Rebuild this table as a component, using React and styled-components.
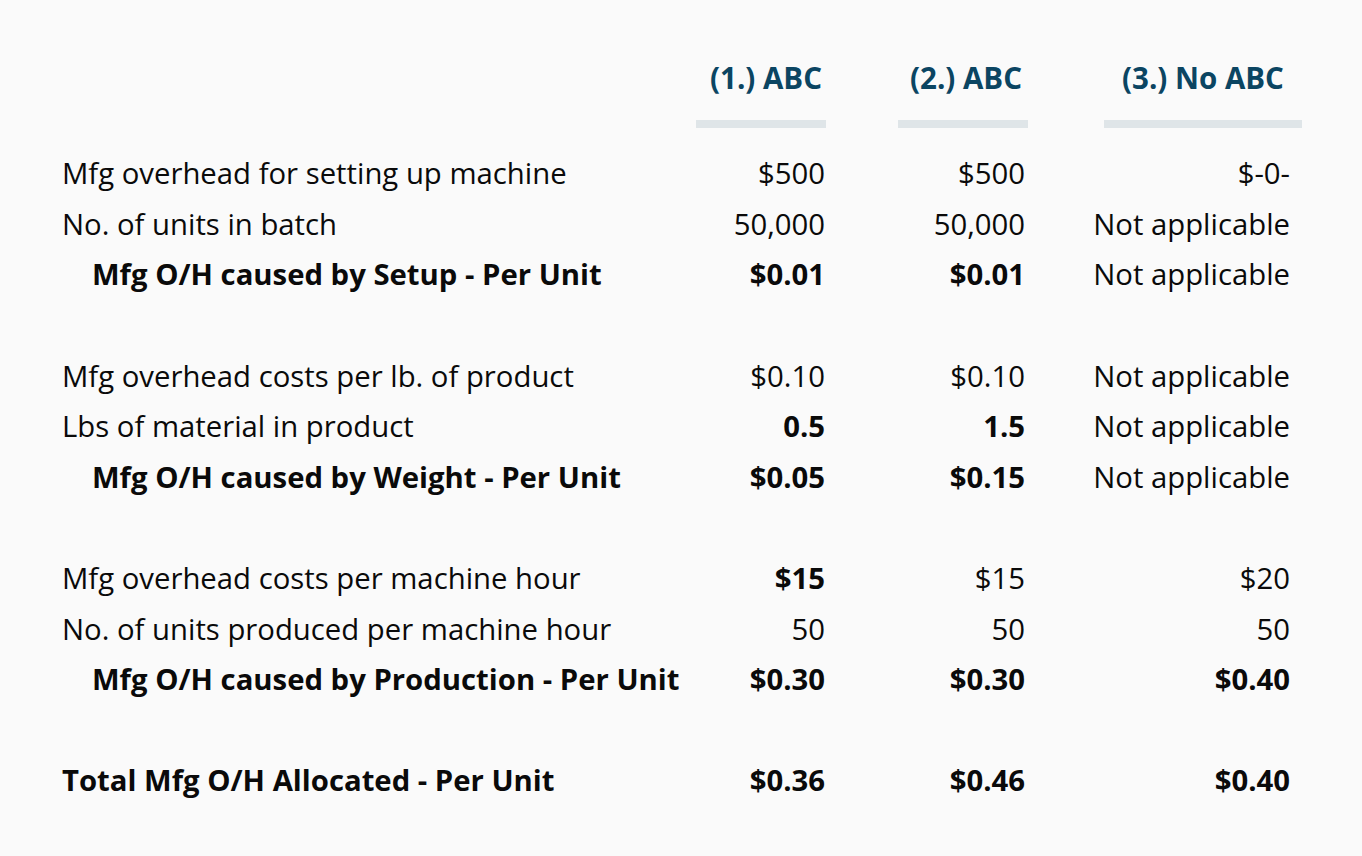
import styled, {createGlobalStyle} from 'styled-components';

const GlobalStyle = createGlobalStyle`
  html, body {
    margin:0;
    padding:0;
    background:#fafafa;
  }
  body {
    font-family:"Open Sans", "Liberation Sans", sans-serif;
    color:#0a0a0a;
  }
`;

const rows = [
  {label:'Mfg overhead for setting up machine', values:['$500', '$500', '$-0-']},
  {label:'No. of units in batch', values:['50,000', '50,000', 'Not applicable']},
  {label:'Mfg O/H caused by Setup - Per Unit', sub:true, values:['$0.01', '$0.01', 'Not applicable'], bold:[true, true, false]},
  null,
  {label:'Mfg overhead costs per lb. of product', values:['$0.10', '$0.10', 'Not applicable']},
  {label:'Lbs of material in product', values:['0.5', '1.5', 'Not applicable'], bold:[true, true, false]},
  {label:'Mfg O/H caused by Weight - Per Unit', sub:true, values:['$0.05', '$0.15', 'Not applicable'], bold:[true, true, false]},
  null,
  {label:'Mfg overhead costs per machine hour', values:['$15', '$15', '$20'], bold:[true, false, false]},
  {label:'No. of units produced per machine hour', values:['50', '50', '50']},
  {label:'Mfg O/H caused by Production - Per Unit', sub:true, values:['$0.30', '$0.30', '$0.40'], bold:[true, true, true]},
  null,
  {label:'Total Mfg O/H Allocated - Per Unit', total:true, values:['$0.36', '$0.46', '$0.40'], bold:[true, true, true]},
];

// right padding of each value column, so the figures line up like the sheet
const padRight = [1, 3, 12];

const headers = [
  {text:'(1.) ABC', width:130, pad:4},
  {text:'(2.) ABC', width:130, pad:6},
  {text:'(3.) No ABC', width:198, center:true},
];

function App() {
  return (
    <>
      <GlobalStyle/>
      <Page>
        <HeadRow>
          <span/>
          {headers.map(h => (
            <HeadCell key={h.text} $width={h.width}>
              <HeadText $center={h.center} $pad={h.pad}>{h.text}</HeadText>
              <Bar/>
            </HeadCell>
          ))}
        </HeadRow>

        <Body>
          {rows.map((row, r) => row === null
            ? <Spacer key={'s' + r}/>
            : [
                <Label key={'l' + r} $sub={row.sub} $bold={row.sub || row.total}>{row.label}</Label>,
                ...row.values.map((v, i) => (
                  <Value key={r + '-' + i} $pad={padRight[i]} $bold={row.bold && row.bold[i]}>{v}</Value>
                )),
              ]
          )}
        </Body>
      </Page>
    </>
  );
}

export default App;

const columns = `
  display:grid;
  grid-template-columns:634px 130px 202px 274px;
`;

const Page = styled.div`
  min-height:856px;
  box-sizing:border-box;
  padding:60px 0 0 62px;
`;

const HeadRow = styled.div`
  ${columns}
`;

const HeadCell = styled.div`
  justify-self:end;
  width:${({$width}) => $width}px;
  display:flex;
  flex-direction:column;
`;

const HeadText = styled.div`
  font-weight:700;
  font-size:29.5px;
  line-height:36px;
  color:#0b4562;
  text-align:${({$center}) => $center ? 'center' : 'right'};
  padding-right:${({$pad}) => $pad ? $pad + 'px' : '0'};
  white-space:nowrap;
`;

const Bar = styled.div`
  margin-top:24px;
  height:8px;
  background:#dfe5e8;
`;

const Body = styled.div`
  ${columns}
  grid-auto-rows:50.6px;
  margin-top:20px;
  font-size:29.3px;
`;

const Spacer = styled.div`
  grid-column:1 / -1;
`;

const Label = styled.div`
  display:flex;
  align-items:center;
  padding-left:${({$sub}) => $sub ? '30px' : '0'};
  font-weight:${({$bold}) => $bold ? 700 : 400};
  white-space:nowrap;
`;

const Value = styled.div`
  display:flex;
  align-items:center;
  justify-content:flex-end;
  padding-right:${({$pad}) => $pad}px;
  font-weight:${({$bold}) => $bold ? 700 : 400};
  white-space:nowrap;
`;
